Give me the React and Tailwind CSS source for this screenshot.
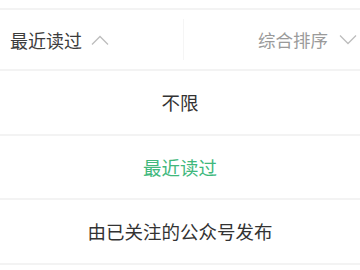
import React from "react";

const font = { fontFamily: '"Noto Sans CJK SC", "Noto Sans", sans-serif' };

function ChevronUp() {
  return (
    <svg width="18" height="10" viewBox="0 0 18 10" fill="none">
      <polyline points="1,9.5 9,1.5 17,9.5" stroke="#bdbdbd" strokeWidth="1.3" />
    </svg>
  );
}

function ChevronDown() {
  return (
    <svg width="18" height="10" viewBox="0 0 18 10" fill="none">
      <polyline points="1,0.5 9,8.5 17,0.5" stroke="#bdbdbd" strokeWidth="1.3" />
    </svg>
  );
}

export default function App() {
  const rows = [
    { t: "不限", c: "text-[#333333]" },
    { t: "最近读过", c: "text-[#40b87c]" },
    { t: "由已关注的公众号发布", c: "text-[#333333]" },
  ];
  return (
    <div className="w-[360px] h-[270px] bg-white overflow-hidden" style={font}>
      <div className="h-[8px]" />
      <div className="h-[63px] border-y-2 border-[#f3f3f3] flex items-center">
        <div className="flex-1 flex items-center pl-[10px] gap-[9px]">
          <span className="text-[18px] text-[#3c3c3c] leading-none">最近读过</span>
          <ChevronUp />
        </div>
        <div className="w-px h-[41px] bg-[#f5f5f5]" />
        <div className="flex-1 flex items-center justify-end pr-[3px] gap-[11px]">
          <span className="text-[17.5px] text-[#9a9a9a] leading-none">综合排序</span>
          <ChevronDown />
        </div>
      </div>
      {rows.map((r) => (
        <div
          key={r.t}
          className="h-[64.5px] border-b-2 border-[#f3f3f3] flex items-center justify-center"
        >
          <span className={`text-[18.5px] leading-none ${r.c}`}>{r.t}</span>
        </div>
      ))}
    </div>
  );
}
